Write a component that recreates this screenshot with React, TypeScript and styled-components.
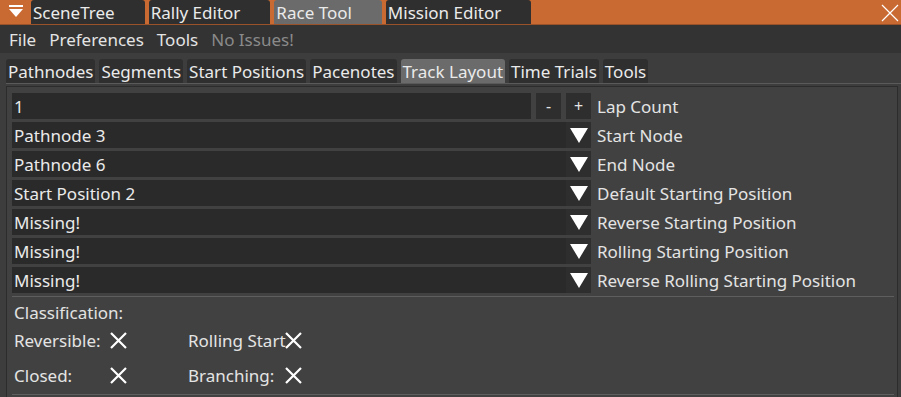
import styled, { createGlobalStyle } from "styled-components";

const GlobalStyle = createGlobalStyle`
  html, body {
    margin: 0;
    padding: 0;
    background: #3d3d3d;
    overflow: hidden;
  }
  body {
    font-family: "Noto Sans", "Open Sans", sans-serif;
    font-size: 17px;
    color: #e2e2e2;
  }
`;

const Window = styled.div`
  width: 901px;
  height: 397px;
  display: flex;
  flex-direction: column;
  background: #3d3d3d;
  overflow: hidden;
  & > * {
    flex-shrink: 0;
  }
`;

const TitleBar = styled.div`
  height: 24px;
  background: #c96a32;
  border-bottom: 1px solid #9a5228;
  display: flex;
  align-items: stretch;
  gap: 4px;
  position: relative;
`;

const MenuIcon = styled.div`
  width: 31px;
  display: flex;
  align-items: center;
  justify-content: center;
  margin-right: -4px;
`;

const WinTab = styled.div<{ $active?: boolean }>`
  background: ${(p) => (p.$active ? "#6b6b6b" : "#2f2f2f")};
  border-radius: 3px 3px 0 0;
  padding: 1px 30px 0 2px;
  display: flex;
  align-items: center;
  line-height: 1;
  color: #eaeaea;
`;

const CloseButton = styled.div`
  position: absolute;
  right: 2px;
  top: 4px;
  width: 18px;
  height: 18px;
`;

const MenuBar = styled.div`
  height: 28px;
  background: #333333;
  display: flex;
  align-items: center;
  gap: 13px;
  padding-left: 9px;
`;

const MenuItem = styled.span<{ $disabled?: boolean }>`
  color: ${(p) => (p.$disabled ? "#8a8a8a" : "#e4e4e4")};
`;

const TabStrip = styled.div`
  display: flex;
  gap: 4px;
  padding-top: 6px;
  margin-left: 6px;
  border-bottom: 1px solid #5a5a5a;
`;

const Tab = styled.div<{ $active?: boolean }>`
  height: 24px;
  padding: 0 2px;
  background: ${(p) => (p.$active ? "#6b6b6b" : "#2f2f2f")};
  border-radius: 3px 3px 0 0;
  display: flex;
  align-items: center;
  color: #eaeaea;
`;

const Panel = styled.div`
  margin: 2px 3px 0 6px;
  flex: 1 0 auto;
  background: #414141;
  border-left: 1px solid #2c2c2c;
  border-right: 1px solid #2c2c2c;
  border-top: 1px solid #2c2c2c;
  padding: 6px 3px 0 5px;
  display: flex;
  flex-direction: column;
  gap: 3px;
`;

const Row = styled.div`
  display: flex;
  align-items: center;
  gap: 6px;
  height: 26px;
`;

const FieldGroup = styled.div`
  width: 579px;
  height: 26px;
  display: flex;
  gap: 5px;
`;

const Field = styled.div`
  flex: 1;
  background: #2a2a2a;
  display: flex;
  align-items: center;
  padding-left: 2px;
  color: #eaeaea;
`;

const Combo = styled.div`
  width: 579px;
  height: 26px;
  display: flex;
  background: #2a2a2a;
`;

const ComboValue = styled.div`
  flex: 1;
  display: flex;
  align-items: center;
  padding-left: 2px;
  color: #eaeaea;
`;

const ComboArrow = styled.div`
  width: 25px;
  background: #2e2e2e;
  display: flex;
  align-items: center;
  justify-content: center;
`;

const StepButton = styled.div`
  width: 25px;
  background: #2e2e2e;
  display: flex;
  align-items: center;
  justify-content: center;
  color: #e4e4e4;
  font-size: 16px;
`;

const Label = styled.span`
  color: #e4e4e4;
  white-space: nowrap;
`;

const Separator = styled.div`
  height: 1px;
  background: #5e5e5e;
`;

const Section = styled.div`
  display: flex;
  flex-direction: column;
  padding-left: 2px;
`;

const SectionTitle = styled.div`
  height: 24px;
  display: flex;
  align-items: center;
`;

const FlagGrid = styled.div`
  display: grid;
  grid-template-columns: 95px 79px 96px 24px;
  grid-auto-rows: 32px;
  row-gap: 3px;
  align-items: center;
`;

const FlagLabel = styled.span`
  white-space: nowrap;
  color: #e4e4e4;
`;

const FlagMark = styled.div`
  display: flex;
  align-items: center;
`;

const TriangleDown = () => (
  <svg width="18" height="16" viewBox="0 0 18 16">
    <polygon points="0,1 18,1 9,16" fill="#ffffff" />
  </svg>
);

const Cross = () => (
  <svg width="19" height="19" viewBox="0 0 19 19">
    <path d="M2 2 L17 17 M17 2 L2 17" stroke="#ffffff" strokeWidth="2.2" />
  </svg>
);

const rows = [
  ["Pathnode 3", "Start Node"],
  ["Pathnode 6", "End Node"],
  ["Start Position 2", "Default Starting Position"],
  ["Missing!", "Reverse Starting Position"],
  ["Missing!", "Rolling Starting Position"],
  ["Missing!", "Reverse Rolling Starting Position"],
];

const editorTabs = ["SceneTree", "Rally Editor", "Race Tool", "Mission Editor"];
const toolTabs = [
  "Pathnodes",
  "Segments",
  "Start Positions",
  "Pacenotes",
  "Track Layout",
  "Time Trials",
  "Tools",
];

export default function App() {
  return (
    <>
      <GlobalStyle />
      <Window>
        <TitleBar>
          <MenuIcon>
            <svg width="16" height="14" viewBox="0 0 16 14">
              <rect x="1" y="0" width="14" height="2" fill="#ffffff" />
              <polygon points="1,4 15,4 8,12" fill="#ffffff" />
            </svg>
          </MenuIcon>
          {editorTabs.map((t) => (
            <WinTab key={t} $active={t === "Race Tool"}>
              {t}
            </WinTab>
          ))}
          <CloseButton>
            <svg width="18" height="18" viewBox="0 0 18 18">
              <path d="M1 1 L17 17 M17 1 L1 17" stroke="#ffffff" strokeWidth="1.2" />
            </svg>
          </CloseButton>
        </TitleBar>
        <MenuBar>
          <MenuItem>File</MenuItem>
          <MenuItem>Preferences</MenuItem>
          <MenuItem>Tools</MenuItem>
          <MenuItem $disabled>No Issues!</MenuItem>
        </MenuBar>
        <TabStrip>
          {toolTabs.map((t) => (
            <Tab key={t} $active={t === "Track Layout"}>
              {t}
            </Tab>
          ))}
        </TabStrip>
        <Panel>
          <Row>
            <FieldGroup>
              <Field>1</Field>
              <StepButton>-</StepButton>
              <StepButton>+</StepButton>
            </FieldGroup>
            <Label>Lap Count</Label>
          </Row>
          {rows.map(([value, label]) => (
            <Row key={label}>
              <Combo>
                <ComboValue>{value}</ComboValue>
                <ComboArrow>
                  <TriangleDown />
                </ComboArrow>
              </Combo>
              <Label>{label}</Label>
            </Row>
          ))}
          <Separator />
          <Section>
            <SectionTitle>Classification:</SectionTitle>
            <FlagGrid>
              <FlagLabel>Reversible:</FlagLabel>
              <FlagMark>
                <Cross />
              </FlagMark>
              <FlagLabel>Rolling Start</FlagLabel>
              <FlagMark>
                <Cross />
              </FlagMark>
              <FlagLabel>Closed:</FlagLabel>
              <FlagMark>
                <Cross />
              </FlagMark>
              <FlagLabel>Branching:</FlagLabel>
              <FlagMark>
                <Cross />
              </FlagMark>
            </FlagGrid>
          </Section>
          <Separator />
        </Panel>
      </Window>
    </>
  );
}
